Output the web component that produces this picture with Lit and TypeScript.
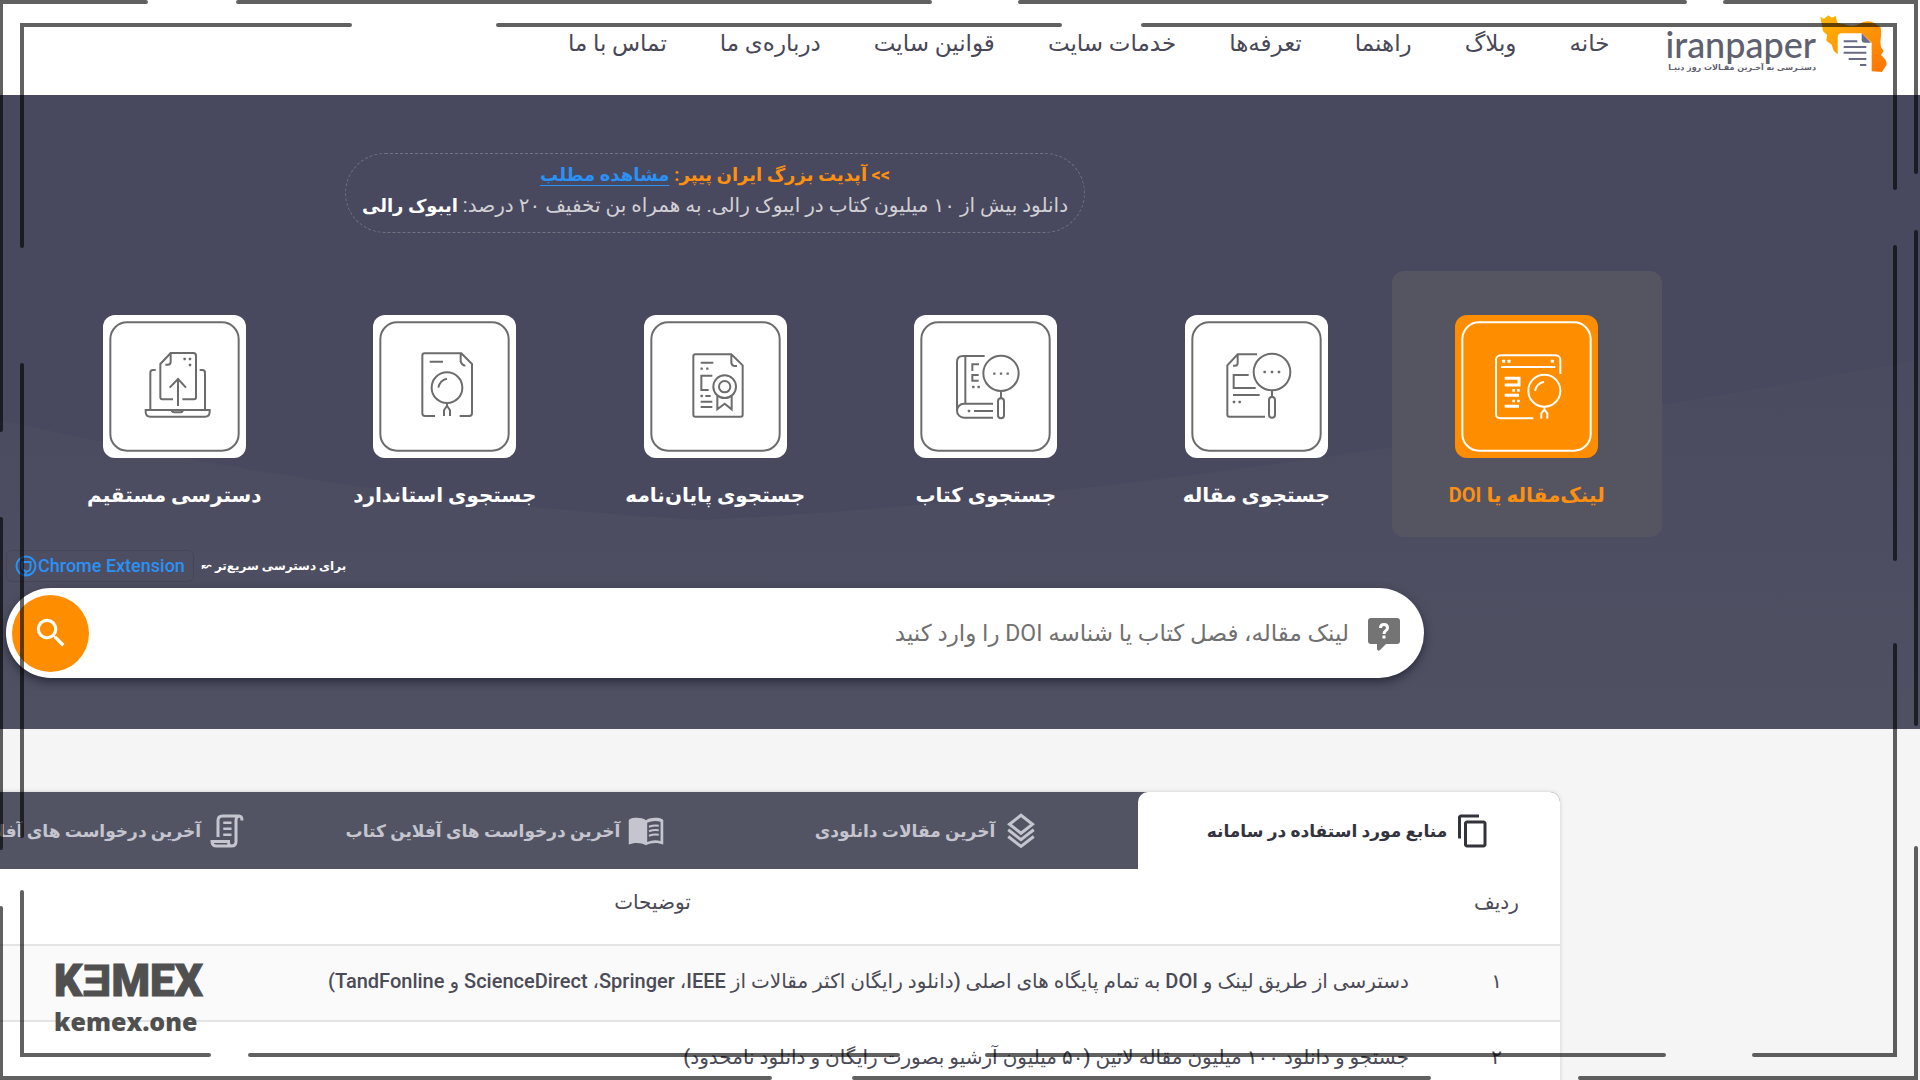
import { LitElement, html, css, svg } from "lit";
import { customElement, state } from "lit/decorators.js";
import { classMap } from "lit/directives/class-map.js";

const dots = (points: number[][], size = 7) =>
  points.map(([x, y]) => svg`<rect x=${x - size / 2} y=${y - size / 2} width=${size} height=${size} rx="1" fill="currentColor" stroke="none"/>`);

const tileIcons = {
  doi: svg`
    <path d="M235 310H135a12 12 0 0 1-12-12V135a14 14 0 0 1 14-14H302a14 14 0 0 1 14 14V177M138 156H301"/>
    ${dots([[146, 139], [162, 139], [292, 139]], 9)}
    <path d="M149 190H192V210H149M149 241H192M149 274H192" stroke-width="9"/>
    ${dots([[176, 226], [190, 226], [176, 258], [190, 258]], 8)}
    <circle cx="268" cy="227" r="48"/><path d="M240 228q3-22 27-28M268 275V284L259 295V311M268 284L277 295V311"/>`,
  article: svg`
    <path d="M240 305H133a6 6 0 0 1-6-6V151L158 118H216M158 118V144q0 8-8 8h-6M191 180H146V219H212M144 240H224"/>
    ${dots([[147, 261], [164, 261]])}
    <circle cx="261" cy="171" r="55"/>${dots([[239, 171], [261, 171], [282, 171]])}
    <path d="M261 226V246"/><rect x="252" y="246" width="18" height="62" rx="9"/>`,
  book: svg`
    <path d="M129 286V141q0-18 18-18H212M154 123V266M237 266H150a21 21 0 0 0 0 42H237M180 288H237M195 148H175V168M194 180H175V197H194"/>
    ${dots([[165, 288], [178, 216], [194, 216], [241, 176], [261, 176], [281, 176]])}
    <circle cx="261" cy="175" r="53"/><path d="M261 228V250"/><rect x="252" y="250" width="18" height="60" rx="9"/>`,
  thesis: svg`
    <path d="M262 118L296 151V299a6 6 0 0 1-6 6H154a6 6 0 0 1-6-6V124a6 6 0 0 1 6-6ZM262 118V143q1 9 9 10h8M170 143H208M205 182H172V225H194M170 260H205M170 276H205M184 243H200"/>
    ${dots([[173, 161], [190, 161], [173, 243]])}
    <circle cx="242" cy="215" r="34"/><circle cx="242" cy="215" r="17"/><path d="M220 243V283L242 266L263 283V243"/>`,
  standard: svg`
    <path d="M186 303H156a8 8 0 0 1-8-8V122a7 7 0 0 1 7-7H265L297 147V295a8 8 0 0 1-8 8H260M263 115V138q2 12 14 14M170 140H210"/>
    <circle cx="222" cy="218" r="46"/><path d="M196 218q4-22 26-27M222 264V272L213 286V303M222 272L231 286V303"/>`,
  direct: svg`
    <path d="M210 253H178a6 6 0 0 1-6-6V147L203 114H271a8 8 0 0 1 8 8V247a6 6 0 0 1-6 6H238M203 114V140q0 9-9 9h-7M225 273V192M200 218L225 192L249 218"/>
    ${dots([[245, 132], [261, 132], [261, 150]])}
    <path d="M158 165H150a8 8 0 0 0-8 8V284M290 165H298a8 8 0 0 1 8 8V284M128 285H320V291q0 14-14 14H142q-14 0-14-14ZM205 286q3 6 9 6h18q6 0 8-6"/>`,
};

const tabIcons = {
  copy: svg`<path fill="currentColor" d="M16 1H4c-1.1 0-2 .9-2 2v14h2V3h12V1zm3 4H8c-1.1 0-2 .9-2 2v14c0 1.1.9 2 2 2h11c1.1 0 2-.9 2-2V7c0-1.1-.9-2-2-2zm0 16H8V7h11v14z"/>`,
  layers: svg`<path fill="none" stroke="currentColor" stroke-width="2" d="M12 1.500L19.700 7.500L12 13.500L4.300 7.500ZM3.500 11.200L12 17.800L20.500 11.200M3.500 15.700L12 22.300L20.500 15.700"/>`,
  book: svg`<path fill="currentColor" d="M12 4.800C10 3.300 7 3 4.500 3.200C2.800 3.300 1 4 .5 4.700V21c3.500-1.500 8-1.500 11.500.5c3.500-2 8-2 11.500-.5V4.700C23 4 21.200 3.300 19.500 3.200C17 3 14 3.300 12 4.800Z"/><path fill="#525463" d="M12.800 6.500q4-1.800 8.900-.7V18.600q-5-1-8.900.7Z"/><path fill="none" stroke="currentColor" stroke-width="1.400" d="M14 9.200q3-1.200 6.500-.7M14 12.200q3-1.200 6.500-.7M14 15.200q3-1.200 6.500-.7"/>`,
  script: svg`<path fill="none" stroke="currentColor" stroke-width="2" d="M6 16V5q0-3 3-3H20.500Q18 2 18 5V19q0 3-3 3H5q-3 0-3-3H13q0 3 2 3M20 2q2 0 2 3"/><path stroke="currentColor" stroke-width="1.800" d="M9.500 6.500H15M9.500 10.500H15M9.500 14.500H15"/>`,
};

@customElement("site-logo")
class SiteLogo extends LitElement {
  static styles = css`
    :host { display: block; }
    .logo { display: flex; align-items: flex-start; gap: 4px; text-decoration: none; color: #5f6070; }
    .words { display: flex; flex-direction: column; align-items: flex-start; padding-top: 11px; }
    .name { font: 500 36px/36px Lato, sans-serif; direction: ltr; }
    .tagline { font: 700 8px/12px "DejaVu Sans", sans-serif; white-space: nowrap; }
    .mark { width: 67px; height: 58px; }
  `;
  render() {
    return html`<a class="logo" href="#">
      <svg class="mark" viewBox="1021 45 201 174" aria-hidden="true">
        <defs><linearGradient id="map" x1="0" y1="0" x2="1" y2="1"><stop offset="0" stop-color="#ffb70a"/><stop offset="1" stop-color="#ff7300"/></linearGradient></defs>
        <path fill="url(#map)" d="M1022 50L1033 56L1046 46L1056 53L1068 48L1073 68L1095 73Q1118 84 1138 72Q1160 58 1182 68L1203 82Q1206 100 1202 125L1204 142L1212 152L1204 165Q1224 182 1220 196Q1214 204 1207 216L1176 214V128L1146 100H1086Q1074 100 1074 112V163L1062 152L1056 134L1040 122L1042 104L1030 94Z"/>
        <path fill="#686b86" d="M1146 100L1174 128H1155Q1146 128 1146 119Z"/>
        <path stroke="#686b86" stroke-width="6" d="M1092 124H1133M1092 141H1160M1092 158H1160M1107 177H1160M1141 195H1160"/>
      </svg>
      <span class="words"><span class="name">iranpaper</span><span class="tagline">دستـرسی به آخـرین مقـالات روز دنیـا</span></span>
    </a>`;
  }
}

@customElement("frame-overlay")
class FrameOverlay extends LitElement {
  static styles = css`
    :host { display: block; position: absolute; inset: 0; pointer-events: none; }
    .lines { width: 100%; height: 100%; display: block; }
    .brand { position: absolute; left: 54px; bottom: 42px; direction: ltr; color: #505050; display: flex; flex-direction: column; }
    .mark { font: 900 44px/46px Roboto, sans-serif; -webkit-text-stroke: 1px #505050; }
    .site { font: 800 25px/34px "Open Sans", sans-serif; }
  `;
  render() {
    return html`
      <svg class="lines" viewBox="0 0 1920 1080" preserveAspectRatio="none" fill="none" stroke="#000" stroke-opacity=".62" stroke-linecap="round" stroke-linejoin="miter" aria-hidden="true">
        <g stroke-width="4">
          <path d="M146 2H1V430M238 2H930M1020 2H1685M1725 2H1916V172M1 519V848M1 908V1078H770M1916 232V724M1916 848V1078H1580M854 1078H1429"/>
          <path d="M350 25H22V246M498 25H1060M1143 25H1895V188M22 365V836M22 892V1055H209M250 1055H898M987 1055H1664M1754 1055H1895V645M1895 247V559"/>
        </g>
      </svg>
      <div class="brand"><span class="mark">KƎMEX</span><span class="site">kemex.one</span></div>`;
  }
}

@customElement("app-root")
class AppRoot extends LitElement {
  @state() private tile = 0;
  @state() private tab = 0;

  private nav = ["خانه", "وبلاگ", "راهنما", "تعرفه‌ها", "خدمات سایت", "قوانین سایت", "درباره‌ی ما", "تماس با ما"];
  private tiles: { label: string; icon: keyof typeof tileIcons }[] = [
    { label: "لینک‌مقاله یا DOI", icon: "doi" },
    { label: "جستجوی مقاله", icon: "article" },
    { label: "جستجوی کتاب", icon: "book" },
    { label: "جستجوی پایان‌نامه", icon: "thesis" },
    { label: "جستجوی استاندارد", icon: "standard" },
    { label: "دسترسی مستقیم", icon: "direct" },
  ];
  private tabs: { label: string; icon: keyof typeof tabIcons }[] = [
    { label: "منابع مورد استفاده در سامانه", icon: "copy" },
    { label: "آخرین مقالات دانلودی", icon: "layers" },
    { label: "آخرین درخواست های آفلاین کتاب", icon: "book" },
    { label: "آخرین درخواست های آفلاین مقاله", icon: "script" },
  ];
  private rows = [
    ["۱", "دسترسی از طریق لینک و DOI به تمام پایگاه های اصلی (دانلود رایگان اکثر مقالات از IEEE، ‏Springer، ‏ScienceDirect و TandFonline)"],
    ["۲", "جستجو و دانلود ۱۰۰ میلیون مقاله لاتین (۵۰ میلیون آرشیو بصورت رایگان و دانلود نامحدود)"],
  ];

  static styles = css`
    :host { display: block; position: relative; height: 100vh; overflow: hidden; direction: rtl; background: #f5f5f5; color: #4b4b57; font-family: Roboto, "DejaVu Sans", sans-serif; font-size: 18px; line-height: 28px; }
    * { box-sizing: border-box; }
    button, input { font: inherit; color: inherit; border: 0; background: none; margin: 0; padding: 0; }
    button { cursor: pointer; }
    .header { display: flex; align-items: flex-start; height: 95px; background: #fff; padding: 15px 33px 0; }
    .nav { display: flex; gap: 53px; padding: 15px 56px 0 0; font-size: 23px; white-space: nowrap; }
    .nav a { color: #484858; text-decoration: none; }
    .hero { position: relative; height: 634px; background: #48485e; color: #fff; padding-top: 58px; }
    .wave { position: absolute; inset: 0; width: 100%; height: 100%; }
    .content { position: relative; }
    .notice { min-width: 740px; height: 80px; margin-inline: auto; border: 1px dashed #737383; border-radius: 40px; padding: 5px 16px; text-align: center; line-height: 31px; white-space: nowrap; color: #d0d0d4; font-size: 20px; }
    .notice p { margin: 0; }
    .notice-row { padding: 0 490px 0 0; display: flex; }
    .accent { color: #ff8f0f; }
    .link { color: #2b91f5; text-underline-offset: 4px; }
    .accent, .link, .notice strong { font-weight: 700; font-size: 18px; }
    .notice strong { color: #fff; }
    .tiles { display: grid; grid-template-columns: repeat(6, 1fr); padding: 38px 258px 0 39px; }
    .tile { display: flex; flex-direction: column; align-items: center; height: 266px; padding-top: 44px; gap: 22px; border-radius: 12px; font-size: 20px; line-height: 30px; font-weight: 700; white-space: nowrap; }
    .tile svg { width: 143px; height: 143px; border-radius: 12px; background: #fff; color: #6c6c6c; fill: none; stroke: currentColor; stroke-width: 6; stroke-linecap: butt; }
    .tile.on { background: #555562; color: #ff8f0f; }
    .tile.on svg { background: #ff8d00; color: #fff; }
    .extension { display: flex; justify-content: flex-end; align-items: center; gap: 8px; padding: 13px 0 6px 6px; font-size: 12px; font-weight: 700; }
    .chip { display: flex; direction: ltr; align-items: center; gap: 1px; height: 32px; padding: 0 8px; border: 1px solid #464658; border-radius: 6px; color: #2b91f5; font-size: 18px; font-weight: 500; text-decoration: none; }
    .chip svg { width: 22px; height: 22px; fill: none; stroke: currentColor; stroke-width: 2; }
    .search { display: flex; align-items: center; height: 90px; margin: 0 496px 0 6px; padding: 0 24px 0 6px; border-radius: 45px; background: #fff; box-shadow: 0 4px 10px #2a2d3c; color: #707070; gap: 19px; font-size: 23px; }
    .search input { flex: 1; min-width: 0; height: 60px; outline: 0; }
    .search input::placeholder { color: #707070; opacity: 1; }
    .help { width: 32px; height: 34px; flex: none; margin-top: 4px; }
    .help svg { display: block; width: 32px; height: 34px; }
    .go { width: 77px; height: 77px; flex: none; border-radius: 50%; background: #ff8d00; color: #fff; display: grid; place-items: center; }
    .go svg { width: 38px; height: 38px; }
    .lists { padding: 63px 360px 0 0; }
    .card { margin-inline-end: -128px; background: #fff; border-radius: 10px 10px 0 0; box-shadow: 0 0 4px #cfcfcf; }
    .tabs { display: grid; grid-template-columns: repeat(4, 1fr); background: #525463; border-radius: 10px 10px 0 0; }
    .tab { display: flex; align-items: center; justify-content: center; gap: 8px; height: 77px; color: #c5c5d0; font-weight: 700; white-space: nowrap; font-size: 17px; }
    .tab svg { width: 36px; height: 36px; }
    .tab.on { background: #fff; color: #33333d; border-radius: 10px 10px 0 0; }
    table { width: 100%; border-collapse: collapse; font-size: 20px; }
    th, td { height: 76px; padding: 0 24px 4px; border-bottom: 2px solid #e4e4e4; font-weight: 400; text-align: right; }
    th { text-align: center; padding-bottom: 9px; }
    td:first-child { text-align: center; }
    th:first-child { width: 127px; }
    tbody tr:nth-child(odd) { background: #fafafa; }
    td { font-weight: 500; }
  `;

  render() {
    return html`
      <header class="header">
        <site-logo></site-logo>
        <nav class="nav">${this.nav.map((n) => html`<a href="#">${n}</a>`)}</nav>
      </header>
      <section class="hero">
        <svg class="wave" viewBox="0 0 1920 634" preserveAspectRatio="none" aria-hidden="true">
          <defs><linearGradient id="haze" x1="0" y1="0" x2="0" y2="1"><stop offset="0" stop-color="#4b4b60"/><stop offset="1" stop-color="#4f5062"/></linearGradient></defs>
          <path fill="url(#haze)" d="M0 325Q350 405 700 425Q1150 405 1920 265V634H0Z"/>
        </svg>
        <div class="content">
          <div class="notice-row">
            <div class="notice">
              <p><span class="accent">&gt;&gt; آپدیت بزرگ ایران پیپر:</span> <a class="link" href="#">مشاهده مطلب</a></p>
              <p>دانلود بیش از ۱۰ میلیون کتاب در ایبوک رالی. به همراه بن تخفیف ۲۰ درصد: <strong>ایبوک رالی</strong></p>
            </div>
          </div>
          <div class="tiles">
            ${this.tiles.map((t, i) => html`<button class=${classMap({ tile: true, on: i === this.tile })} @click=${() => (this.tile = i)}>
              <svg viewBox="0 0 429 429" aria-hidden="true"><rect x="22" y="22" width="385" height="385" rx="50"/>${tileIcons[t.icon]}</svg>
              <span>${t.label}</span>
            </button>`)}
          </div>
          <div class="extension">
            <span>برای دسترسی سریع‌تر ↜</span>
            <a class="chip" href="#"><svg viewBox="0 0 22 22" aria-hidden="true"><circle cx="11" cy="11" r="9.500"/><path d="M6 7H15.500V12q0 4-4 4.500L10 20M7 8v5q1 3 4 3"/></svg>Chrome Extension</a>
          </div>
          <form class="search" @submit=${(e: Event) => e.preventDefault()}>
            <button class="help" type="button" aria-label="راهنما">
              <svg viewBox="0 0 32 34"><path fill="#747474" d="M3 0H29a3 3 0 0 1 3 3V23a3 3 0 0 1-3 3H18L12 32Q9 34 9 30V26H3a3 3 0 0 1-3-3V3a3 3 0 0 1 3-3Z"/><path fill="none" stroke="#fff" stroke-width="3" d="M12.500 10q0-3.500 3.500-3.500t3.500 3.300q0 2-2 3.200-1.500 1-1.500 3M16 17.500V20.500"/></svg>
            </button>
            <input type="text" aria-label="لینک مقاله" placeholder="لینک مقاله، فصل کتاب یا شناسه DOI را وارد کنید" />
            <button class="go" type="submit" aria-label="جستجو"><svg viewBox="0 0 24 24"><path fill="currentColor" d="M15.500 14h-.79l-.28-.27A6.471 6.471 0 0 0 16 9.500 6.500 6.500 0 1 0 9.500 16c1.610 0 3.090-.59 4.230-1.570l.27.28v.79l5 4.990L20.490 19l-4.990-5zm-6 0C7.010 14 5 11.990 5 9.500S7.010 5 9.500 5 14 7.010 14 9.500 11.990 14 9.500 14z"/></svg></button>
          </form>
        </div>
      </section>
      <main class="lists">
        <div class="card">
          <div class="tabs" role="tablist">
            ${this.tabs.map((t, i) => html`<button role="tab" aria-selected=${i === this.tab} class=${classMap({ tab: true, on: i === this.tab })} @click=${() => (this.tab = i)}>
              <svg viewBox="0 0 24 24" aria-hidden="true">${tabIcons[t.icon]}</svg><span>${t.label}</span>
            </button>`)}
          </div>
          <table>
            <thead><tr><th scope="col">ردیف</th><th scope="col">توضیحات</th></tr></thead>
            <tbody>${this.rows.map((r) => html`<tr><td>${r[0]}</td><td>${r[1]}</td></tr>`)}</tbody>
          </table>
        </div>
      </main>
      <frame-overlay></frame-overlay>`;
  }
}
